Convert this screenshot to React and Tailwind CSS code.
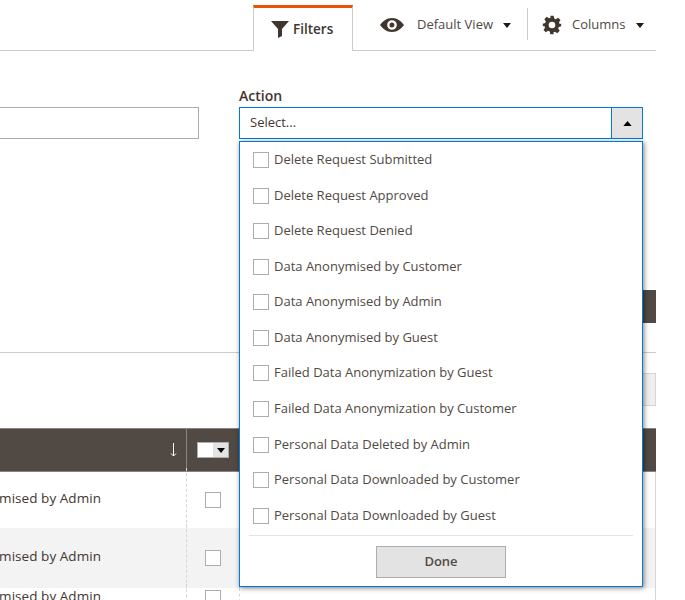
const opts = [
  ["Delete Request Submitted", "h-[36px]"],
  ["Delete Request Approved", "h-[35px]"],
  ["Delete Request Denied", "h-[36px]"],
  ["Data Anonymised by Customer", "h-[35px]"],
  ["Data Anonymised by Admin", "h-[36px]"],
  ["Data Anonymised by Guest", "h-[35px]"],
  ["Failed Data Anonymization by Guest", "h-[36px]"],
  ["Failed Data Anonymization by Customer", "h-[36px]"],
  ["Personal Data Deleted by Admin", "h-[35px]"],
  ["Personal Data Downloaded by Customer", "h-[36px]"],
  ["Personal Data Downloaded by Guest", "h-[35px]"],
];

function Caret({ up, className }) {
  return (
    <svg viewBox="0 0 10 6" className={className} fill="currentColor">
      <path d={up ? "M5 0L10 6H0Z" : "M0 0H10L5 6Z"} />
    </svg>
  );
}

function Row({ bg, h }) {
  return (
    <div className={`flex ${h} ${bg}`}>
      <div className="w-[187px] shrink-0 border-r border-dashed border-[#d6d6d6] flex items-center justify-end pr-[85px] overflow-hidden whitespace-nowrap text-[13.5px] text-[#41362f] -mt-[4px]">
        <span className="tracking-[0.05px]">Data Anonymised by Admin</span>
      </div>
      <div className="w-[53px] shrink-0 border-r border-dashed border-[#d6d6d6] flex items-center pl-[18px]">
        <span className="block w-[16px] h-[16px] border border-[#adadad] bg-white" />
      </div>
      <div className="flex-1 border-r border-[#d6d6d6]" />
    </div>
  );
}

export default function App() {
  return (
    <div className="relative w-[685px] h-[600px] overflow-hidden bg-white font-['Open_Sans',sans-serif] text-[#41362f]">
      <div className="w-[656px]">
        {/* toolbar */}
        <div className="flex h-[51px] pt-[5px] border-b border-[#cccccc] pl-[253px]">
          <div className="w-[100px] h-[46px] -mb-px bg-white border-x border-[#cccccc] border-t-[3px] border-t-[#eb5202] flex items-center pl-[17px] gap-[4px] font-semibold text-[13px] text-[#41362f] relative z-10">
            <svg viewBox="0 0 18 17" className="w-[18px] h-[17px]" fill="#41362f">
              <path d="M0 0H18L11 8V15L7 17V8Z" />
            </svg>
            <span className="text-[13.5px] -mt-[1px]">Filters</span>
          </div>
          <div className="flex items-center h-[40px] pl-[27px] w-[174px] text-[13px] text-[#514943]">
            <svg viewBox="0 0 24 14" className="w-[24px] h-[14px] shrink-0" fill="#41362f">
              <path fillRule="evenodd" d="M12 0C6.5 0 2.5 3.5 0 7c2.5 3.5 6.5 7 12 7s9.500-3.500 12-7C21.500 3.500 17.500 0 12 0Zm0 2.200a4.800 4.800 0 1 1 0 9.600 4.800 4.800 0 0 1 0-9.600Zm0 2.300a2.500 2.500 0 1 0 0 5 2.500 2.500 0 0 0 0-5Z" />
            </svg>
            <span className="ml-[13px] whitespace-nowrap">Default View</span>
            <Caret className="ml-[10px] w-[8px] h-[5px] text-[#1f1a17]" />
          </div>
          <div className="w-px h-[32px] mt-[3px] bg-[#cccccc]" />
          <div className="flex items-center h-[40px] pl-[14px] text-[13px] text-[#514943]">
            <svg viewBox="0 0 24 24" className="w-[20px] h-[20px] shrink-0" fill="#41362f">
              <path fillRule="evenodd" d="M10 1h4l.7 3.200 1.900.800 2.800-1.800 2.800 2.800-1.800 2.800.8 1.900L23 10.400v3.200l-2.800.7-.8 1.900 1.800 2.800-2.800 2.800-2.800-1.800-1.900.8L14 23h-4l-.7-3.200-1.900-.8-2.800 1.800-2.800-2.800 1.800-2.800-.8-1.900L1 13.600v-3.200l2.800-.7.800-1.900-1.800-2.800 2.800-2.800 2.800 1.800 1.900-.8L10 1Zm2 7a4 4 0 1 0 0 8 4 4 0 0 0 0-8Z" />
            </svg>
            <span className="ml-[10px] whitespace-nowrap">Columns</span>
            <Caret className="ml-[11px] w-[8px] h-[5px] text-[#1f1a17]" />
          </div>
        </div>

        {/* filters */}
        <div className="flex gap-[40px] h-[302px] border-b border-[#cccccc]">
          <div className="w-[199px] shrink-0 pt-[56px]">
            <div className="h-[32px] border border-[#adadad] border-l-0" />
          </div>
          <div className="w-[404px] shrink-0 pt-[35px]">
            <div className="text-[14px] leading-[19px] font-semibold text-[#41362f]">Action</div>
            <div className="mt-[2px] flex h-[32px] border border-[#007bdb]">
              <div className="flex-1 pl-[10px] text-[13px] leading-[28px] text-[#41362f]">Select...</div>
              <div className="w-[31px] bg-[#e3e3e3] border-l border-[#007bdb] flex items-center justify-center">
                <Caret up className="w-[9px] h-[5px] text-black" />
              </div>
            </div>
          </div>
          <div className="flex-1 mt-[239px] h-[33px] bg-[#514943] -ml-[40px]" />
        </div>

        {/* grid toolbar */}
        <div className="flex justify-end h-[75px] pt-[20px]">
          <div className="w-[13px] h-[33px] bg-[#efefef] border-y border-r border-[#d6d6d6]" />
        </div>

        {/* table */}
        <div className="h-[44px] flex bg-[#514943] border-y border-[#8a837f]">
          <div className="w-[187px] shrink-0 border-r border-[#8a837f] flex items-center justify-end pr-[9px]">
            <svg viewBox="0 0 7 14" className="w-[7px] h-[14px]" fill="none" stroke="#ffffff" strokeWidth="1">
              <path d="M3.500 0V13M1 10.500L3.500 13 6 10.500" />
            </svg>
          </div>
          <div className="w-[53px] shrink-0 flex items-center pl-[10px]">
            <div className="flex w-[32px] h-[16px] border border-[#adadad] bg-white">
              <div className="w-[15px]" />
              <div className="flex-1 bg-[#e3e3e3] flex items-center justify-center">
                <Caret className="w-[8px] h-[5px] text-black" />
              </div>
            </div>
          </div>
        </div>
        <Row bg="bg-white" h="h-[56px]" />
        <Row bg="bg-[#f3f3f3]" h="h-[60px]" />
        <Row bg="bg-white" h="h-[20px]" />
      </div>

      {/* dropdown */}
      <div className="absolute left-[239px] top-[141px] w-[404px] h-[446px] bg-white border border-[#007bdb] shadow-[1px_1px_5px_rgba(0,0,0,0.5)] flex flex-col">
        <div className="pt-[0px] px-[13px]">
          {opts.map(([t, h]) => (
            <div key={t} className={`flex items-center ${h} whitespace-nowrap`}>
              <span className="block w-[16px] h-[16px] border border-[#adadad] bg-white shrink-0" />
              <span className="ml-[5px] text-[13px] text-[#514943]">{t}</span>
            </div>
          ))}
        </div>
        <div className="mx-[9px] mt-[2px] border-t border-[#e3e3e3]" />
        <div className="flex justify-center pt-[10px]">
          <div className="w-[130px] h-[32px] bg-[#e3e3e3] border border-[#adadad] flex items-center justify-center font-semibold text-[13px] text-[#514943]">
            Done
          </div>
        </div>
      </div>
    </div>
  );
}
